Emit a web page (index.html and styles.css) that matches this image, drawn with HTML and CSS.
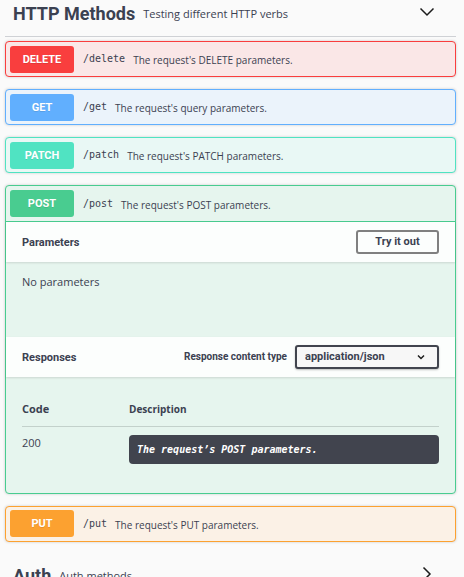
FILE: index.html
```html
<!DOCTYPE html>
<html lang="en">
<head>
<meta charset="utf-8">
<title>HTTP Methods</title>
<link rel="stylesheet" href="styles.css">
</head>
<body>
<main>
  <section class="tag">
    <header class="tag-header">
      <h2>HTTP Methods</h2>
      <p>Testing different HTTP verbs</p>
      <button class="toggle" aria-label="Collapse"><svg width="16" height="16" viewBox="0 0 16 16"><path d="M1.500 4.500 8 11l6.500-6.500"/></svg></button>
    </header>
    <article class="op delete">
      <button class="summary"><span class="method">DELETE</span><code>/delete</code><span class="note">The request's DELETE parameters.</span></button>
    </article>
    <article class="op get">
      <button class="summary"><span class="method">GET</span><code>/get</code><span class="note">The request's query parameters.</span></button>
    </article>
    <article class="op patch">
      <button class="summary"><span class="method">PATCH</span><code>/patch</code><span class="note">The request's PATCH parameters.</span></button>
    </article>
    <article class="op post open">
      <button class="summary"><span class="method">POST</span><code>/post</code><span class="note">The request's POST parameters.</span></button>
      <div class="bar">
        <h4>Parameters</h4>
        <button class="try">Try it out</button>
      </div>
      <p class="empty">No parameters</p>
      <div class="bar">
        <h4>Responses</h4>
        <label for="content-type">Response content type</label>
        <span class="select">
          <select id="content-type"><option>application/json</option></select>
          <svg width="8" height="8" viewBox="0 0 8 8"><path d="M1 2.500 4 5.500 7 2.500"/></svg>
        </span>
      </div>
      <div class="responses">
        <table>
          <thead><tr><th class="code">Code</th><th>Description</th></tr></thead>
          <tbody><tr><td class="code">200</td><td><div class="message">The request’s POST parameters.</div></td></tr></tbody>
        </table>
      </div>
    </article>
    <article class="op put">
      <button class="summary"><span class="method">PUT</span><code>/put</code><span class="note">The request's PUT parameters.</span></button>
    </article>
  </section>
  <section class="tag">
    <header class="tag-header">
      <h2>Auth</h2>
      <p>Auth methods</p>
      <button class="toggle" aria-label="Expand"><svg width="16" height="16" viewBox="0 0 16 16"><path d="m4.500 1.500L11 8l-6.500 6.500"/></svg></button>
    </header>
  </section>
</main>
</body>
</html>
```
FILE: styles.css
```css
* { box-sizing: border-box; }
html { overflow: hidden; }
body {
  margin: 0;
  background: #fafafa;
  color: #3b4151;
  font: 11px/16px "Open Sans", sans-serif;
}
h2, h4, p { margin: 0; }
button { font: inherit; color: inherit; cursor: pointer; }
main { padding: 0 8px 0 5px; }
.tag { margin-bottom: 20px; }
.tag-header {
  display: flex;
  align-items: center;
  height: 37px;
  padding: 0 21px 8px 8px;
  margin-bottom: 4px;
  border-bottom: 1px solid #cfd1d5;
}
h2 { font: bold 18px/28px Roboto, sans-serif; margin-right: 8px; }
.toggle {
  display: flex;
  margin-left: auto;
  padding: 0 0 4px;
  border: 0;
  background: none;
}
svg { fill: none; stroke: #1b1b1b; stroke-width: 1.5; }
.op {
  margin-bottom: 12px;
  border: 1px solid var(--line);
  border-radius: 4px;
  background: var(--fill);
  box-shadow: 0 0 3px rgba(0, 0, 0, .19);
}
.delete { --line: #f93e3e; --fill: #fae7e7; }
.get { --line: #61affe; --fill: #ebf3fb; }
.patch { --line: #50e3c2; --fill: #e9f8f5; }
.post { --line: #49cc90; --fill: #e6f5ee; }
.put { --line: #fca130; --fill: #fbf1e6; }
.summary {
  display: flex;
  align-items: center;
  width: 100%;
  height: 34px;
  padding: 0 4px;
  border: 0;
  background: none;
  text-align: left;
}
.open .summary { height: 36px; border-bottom: 1px solid var(--line); }
.method {
  width: 64px;
  padding-top: 1px;
  border-radius: 3px;
  background: var(--line);
  color: #fff;
  font: bold 11px/26px Roboto, sans-serif;
  text-align: center;
  text-shadow: 0 1px 0 rgba(0, 0, 0, .1);
}
.summary code {
  margin: 0 8px 0 9px;
  font: 10px/16px "DejaVu Sans Mono", monospace;
}
.note { padding-top: 2px; font-size: 10px; }
.bar {
  display: flex;
  align-items: center;
  height: 40px;
  padding: 0 16px;
  background: rgba(255, 255, 255, .85);
  box-shadow: 0 1px 2px rgba(0, 0, 0, .12);
}
h4 { margin-right: auto; padding-top: 2px; font: bold 11px/16px Roboto, sans-serif; }
.try {
  width: 83px;
  height: 24px;
  padding: 0;
  border: 2px solid #808080;
  border-radius: 3px;
  background: none;
  font: bold 11px/16px Roboto, sans-serif;
}
.empty { height: 75px; padding: 12px 16px; }
.bar label { margin-right: 8px; font: bold 10px/16px Roboto, sans-serif; }
.select { position: relative; width: 144px; }
select {
  display: block;
  appearance: none;
  width: 100%;
  height: 24px;
  padding: 0 8px;
  border: 2px solid #41444e;
  border-radius: 3px;
  background: #f7f7f7;
  box-shadow: 0 1px 2px rgba(0, 0, 0, .25);
  color: #3b4151;
  font: bold 11px/16px Roboto, sans-serif;
}
.select svg { position: absolute; top: 8px; right: 14px; pointer-events: none; }
.responses { padding: 24px 16px 29px; }
table { width: 100%; border-collapse: collapse; }
th { height: 25px; padding: 0; border-bottom: 1px solid #c3d1cb; text-align: left; font-size: 10px; vertical-align: top; }
td { padding: 8px 0 0; vertical-align: top; }
.code { width: 107px; font-size: 11px; }
.message {
  padding: 7px 8px 6px;
  border-radius: 4px;
  background: #41444e;
  color: #fff;
  font: italic bold 10px/16px "DejaVu Sans Mono", monospace;
}
```
